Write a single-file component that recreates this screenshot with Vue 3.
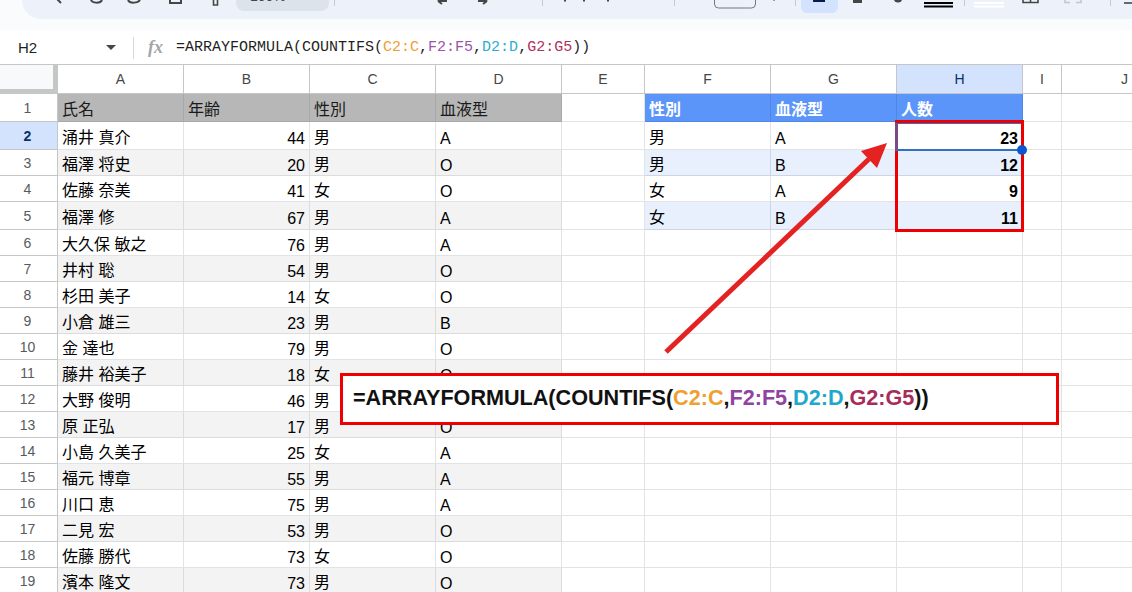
<template>
  <div class="page">
    <!-- toolbar is scrolled off, only the lower edge of it shows -->
    <div class="top-band">
      <div class="toolbar">
        <svg class="tools-left" width="214" height="19" viewBox="22 0 214 19" fill="none" stroke="#444746" stroke-width="2">
          <path d="M57 -1 L61 3" />
          <path d="M91 0 C92 3 100 4 102 0" />
          <path d="M128 0 C130 4 138 3 140 0" />
          <path d="M170 -2 V3 H181 V-2" />
          <path d="M213.5 0 V5 H217.5 V0" stroke-width="1.6" />
        </svg>
        <div class="zoom-chip">100%</div>
        <svg class="tools-right" width="803" height="19" viewBox="329 0 803 19" fill="none">
          <g stroke="#c7c9cc" stroke-width="1">
            <path d="M334.5 0 V6" />
            <path d="M542.5 0 V6" />
            <path d="M674.5 0 V6" />
            <path d="M795.5 0 V6" />
            <path d="M964.5 0 V6" />
            <path d="M1110.5 0 V6" />
          </g>
          <g stroke="#444746" stroke-width="2">
            <path d="M438 1 H447 M438 1 L442 -2 M438 1 L442 4" />
            <path d="M487 1 H478 M487 1 L483 -2 M487 1 L483 4" />
            <path d="M565 0 V1.5 M584 0 V1.5 M608 0 V1.5" />
            <path d="M774 0 V1" stroke="#9aa0a6" />
          </g>
          <rect x="714.5" y="-20" width="41" height="28" rx="4" stroke="#747775" />
          <path d="M801 -2 H838 V7 a6 6 0 0 1 -6 6 H807 a6 6 0 0 1 -6 -6 Z" fill="#d3e3fd" />
          <rect x="813" y="-2" width="12" height="4" fill="#041e49" />
          <rect x="853" y="-2" width="9" height="5" fill="#444746" />
          <circle cx="898" cy="-2" r="4.5" fill="#444746" />
          <path d="M924 3 H953 M924 6.5 H953" stroke="#000" stroke-width="1.8" />
          <path d="M974 3 H1004 M974 6.5 H1004" stroke="#fff" stroke-width="2" />
          <path d="M1023 -2 V2.5 H1038 V-2 M1030.5 -2 V2.5" stroke="#444746" stroke-width="1.6" />
          <path d="M1065 0 V2.5 H1070 M1081 0 V2.5 H1076" stroke="#c4c7c9" stroke-width="1.6" />
          <path d="M1124 3 H1132" stroke="#444746" stroke-width="1.6" />
        </svg>
      </div>
    </div>

    <div class="formula-bar">
      <div class="name-box">H2</div>
      <span class="caret"></span>
      <span class="divider"></span>
      <span class="fx">fx</span>
      <div class="formula-text">=ARRAYFORMULA(COUNTIFS(<span class="c1">C2:C</span>,<span class="c2">F2:F5</span>,<span class="c3">D2:D</span>,<span class="c4">G2:G5</span>))</div>
    </div>

    <div class="sheet">
      <div class="corner"></div>
      <div v-for="c in columns" :key="c" class="col-head" :class="{ active: c === 'H' }">{{ c }}</div>
      <template v-for="(row, i) in rows" :key="i">
        <div class="row-head" :class="{ active: i === 1 }">{{ i + 1 }}</div>
        <div
          v-for="(cell, j) in row"
          :key="j"
          class="cell"
          :class="cellClass(i, j, cell)"
        >{{ cell }}</div>
      </template>
    </div>

    <!-- annotations drawn over the sheet -->
    <svg class="arrow" width="1132" height="592" viewBox="0 0 1132 592">
      <path d="M666 352 L869 159" stroke="#e52222" stroke-width="5" fill="none" />
      <path d="M887 143 L861 151 L877 168 Z" fill="#e52222" />
    </svg>
    <div class="red-box"></div>
    <div class="selection"><span class="handle"></span></div>
    <div class="callout"><span>=ARRAYFORMULA(COUNTIFS(<span class="o1">C2:C</span>,<span class="o2">F2:F5</span>,<span class="o3">D2:D</span>,<span class="o4">G2:G5</span>))</span></div>
  </div>
</template>

<script setup>
const columns = ['A', 'B', 'C', 'D', 'E', 'F', 'G', 'H', 'I', 'J']

const people = [
  ['氏名', '年齢', '性別', '血液型'],
  ['涌井 真介', '44', '男', 'A'],
  ['福澤 将史', '20', '男', 'O'],
  ['佐藤 奈美', '41', '女', 'O'],
  ['福澤 修', '67', '男', 'A'],
  ['大久保 敏之', '76', '男', 'A'],
  ['井村 聡', '54', '男', 'O'],
  ['杉田 美子', '14', '女', 'O'],
  ['小倉 雄三', '23', '男', 'B'],
  ['金 達也', '79', '男', 'O'],
  ['藤井 裕美子', '18', '女', 'O'],
  ['大野 俊明', '46', '男', 'O'],
  ['原 正弘', '17', '男', 'O'],
  ['小島 久美子', '25', '女', 'A'],
  ['福元 博章', '55', '男', 'A'],
  ['川口 恵', '75', '男', 'A'],
  ['二見 宏', '53', '男', 'O'],
  ['佐藤 勝代', '73', '女', 'O'],
  ['濱本 隆文', '73', '男', 'O'],
]

const summary = [
  ['性別', '血液型', '人数'],
  ['男', 'A', '23'],
  ['男', 'B', '12'],
  ['女', 'A', '9'],
  ['女', 'B', '11'],
]

const rows = people.map((p, i) => {
  const s = summary[i] || ['', '', '']
  return [...p, '', ...s, '', '']
})

function cellClass(i, j, text) {
  const classes = []
  // latin text sits a little lower than the CJK text on the same row
  if (/^[A-Z0-9]+$/.test(text)) classes.push('latin')
  if (j <= 3) {
    if (i === 0) classes.push('gray-head')
    else if (i % 2 === 0) classes.push('gray-row')
    if (i > 0 && j === 1) classes.push('num')
  }
  if (j >= 5 && j <= 7 && i <= 4) {
    if (i === 0) classes.push('blue-head')
    else if (i % 2 === 0) classes.push('blue-row')
    if (i > 0 && j === 7) classes.push('num', 'bold')
  }
  return classes
}
</script>

<style>
html, body {
  margin: 0;
  background: #fff;
  overflow: hidden;
}
</style>

<style scoped>
.page {
  position: relative;
  width: 1132px;
  height: 592px;
  overflow: hidden;
  background: #fff;
  font-family: "Liberation Sans", "Noto Sans CJK JP", sans-serif;
  color: #000;
}

.top-band {
  height: 30px;
  background: #f9fbfd;
}
.toolbar {
  display: flex;
  align-items: flex-start;
  height: 19px;
  margin-left: 22px;
  background: #edf2fa;
  border-bottom-left-radius: 24px;
  overflow: hidden;
}
.tools-left,
.tools-right {
  flex: none;
  display: block;
}
.zoom-chip {
  flex: none;
  width: 93px;
  height: 28px;
  margin-top: -17px;
  box-sizing: border-box;
  padding: 5px 0 0 14px;
  border-radius: 8px;
  background: #dde3ea;
  color: #444746;
  font-size: 14px;
}

.formula-bar {
  display: flex;
  align-items: center;
  height: 35px;
  padding-left: 18px;
  background: #fff;
}
.name-box {
  width: 88px;
  font-size: 15px;
  color: #1f1f1f;
}
.caret {
  width: 0;
  height: 0;
  border-left: 5px solid transparent;
  border-right: 5px solid transparent;
  border-top: 5px solid #444746;
}
.divider {
  width: 1px;
  height: 22px;
  margin-left: 17px;
  background: #d5d7d9;
}
.fx {
  width: 28px;
  margin-left: 14px;
  font-family: "Liberation Serif", serif;
  font-style: italic;
  font-weight: bold;
  font-size: 18px;
  color: #a3a5a7;
}
.formula-text {
  font-family: "Liberation Mono", monospace;
  font-size: 15px;
  color: #1f1f1f;
  white-space: nowrap;
}
.c1 { color: #f0a030; }
.c2 { color: #9a55a8; }
.c3 { color: #2aaed0; }
.c4 { color: #b03060; }

.sheet {
  display: grid;
  grid-template-columns: 58px 126px 126px 126px 126px 83px 126px 126px 126px 39px 126px;
  grid-template-rows: 29px 28px 28px 26px 26px 28px repeat(14, 26px);
  width: 1188px;
  border-top: 1px solid #c4c7c5;
  margin-top: -1px;
}
.corner {
  box-sizing: border-box;
  background: #f8f9fa;
  border-right: 5px solid #c4c7c5;
  border-bottom: 5px solid #c4c7c5;
}
.col-head {
  display: flex;
  align-items: center;
  justify-content: center;
  box-sizing: border-box;
  border-right: 1px solid #c4c7c5;
  border-bottom: 1px solid #c4c7c5;
  color: #444746;
  font-size: 14px;
}
.col-head.active {
  background: #d3e3fd;
  color: #0b2f66;
}
.row-head {
  display: flex;
  align-items: center;
  justify-content: center;
  box-sizing: border-box;
  padding-right: 2px;
  border-right: 1px solid #c4c7c5;
  border-bottom: 1px solid #c4c7c5;
  color: #575a5c;
  font-size: 14px;
}
.row-head.active {
  background: #d3e3fd;
  color: #0b2f66;
  font-weight: bold;
}
.cell {
  display: flex;
  align-items: center;
  box-sizing: border-box;
  padding: 1px 4px 0;
  border-right: 1px solid #e1e3e5;
  border-bottom: 1px solid #e1e3e5;
  font-size: 16px;
  white-space: nowrap;
  overflow: hidden;
}
.latin {
  padding-top: 6px;
}
.num {
  justify-content: flex-end;
}
.bold {
  font-weight: bold;
}
.gray-head {
  background: #b7b7b7;
  border-color: #a9a9a9;
  color: #1a1a1a;
}
.gray-row {
  background: #f3f3f3;
  border-color: #dcdcdc;
}
.blue-head {
  background: #5b95f9;
  border-color: #4f87e6;
  color: #fff;
  font-weight: bold;
}
.blue-row {
  background: #e8f0fe;
  border-color: #ccd5e6;
}

.arrow {
  position: absolute;
  left: 0;
  top: 0;
  pointer-events: none;
}
.red-box {
  position: absolute;
  left: 895px;
  top: 120px;
  width: 129px;
  height: 112px;
  box-sizing: border-box;
  border: 3px solid #ee0000;
}
.selection {
  position: absolute;
  left: 895px;
  top: 123px;
  width: 126px;
  height: 28px;
  box-sizing: border-box;
  border-top: 1px solid #2f6fc4;
  border-left: 3px solid #7a4a86;
  border-bottom: 2px solid #2f6fc4;
}
.handle {
  position: absolute;
  right: -6px;
  bottom: -6px;
  width: 10px;
  height: 10px;
  border-radius: 50%;
  background: #0b57d0;
}
.callout {
  position: absolute;
  left: 340px;
  top: 373px;
  width: 719px;
  height: 52px;
  box-sizing: border-box;
  display: flex;
  align-items: center;
  padding: 0 0 3px 10px;
  border: 3px solid #ee0000;
  background: #fff;
  font-size: 21.6px;
  font-weight: bold;
  color: #111;
  white-space: nowrap;
}
.o1 { color: #f0a030; }
.o2 { color: #8e44a0; }
.o3 { color: #1fa8cc; }
.o4 { color: #a82c58; }
</style>
